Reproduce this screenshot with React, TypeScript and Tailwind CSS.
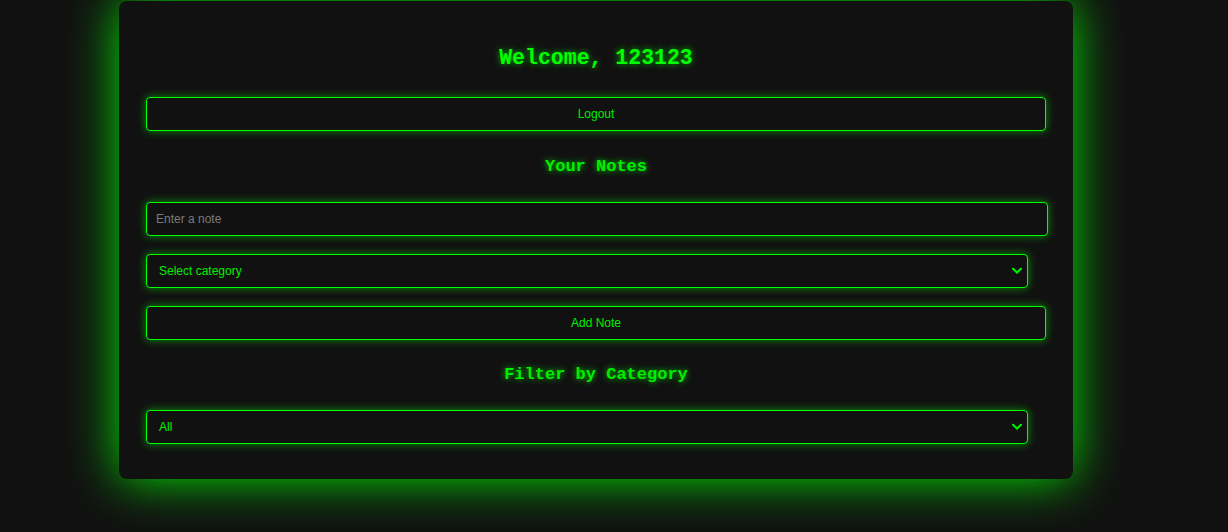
import React from "react";

const glow = "shadow-[0_0_8px_rgba(0,255,0,0.55)]";

function Chevron() {
  return (
    <svg
      className="pointer-events-none absolute right-[5px] top-1/2 -translate-y-1/2"
      width="10"
      height="7"
      viewBox="0 0 10 7"
      fill="none"
    >
      <path d="M1 1.2 L5 5 L9 1.2" stroke="#00ee00" strokeWidth="2.2" strokeLinecap="square" />
    </svg>
  );
}

function Select({ label }: { label: string }) {
  return (
    <div className={`relative w-[882px] h-[34px] rounded-[4px] border border-[#00ff00] bg-[#111111] ${glow}`}>
      <div className="flex h-full items-center pl-[12px] text-[12px] text-[#00ee00] font-['Liberation_Sans',Arial,sans-serif]">
        {label}
      </div>
      <Chevron />
    </div>
  );
}

function Button({ label }: { label: string }) {
  return (
    <button
      className={`w-[900px] h-[34px] rounded-[4px] border border-[#00ff00] bg-[#111111] ${glow} text-[12px] text-[#00ee00] font-['Liberation_Sans',Arial,sans-serif] flex items-center justify-center`}
    >
      {label}
    </button>
  );
}

export default function App() {
  return (
    <div className="min-h-[532px] w-full bg-[#111111] overflow-hidden">
      <div className="ml-[119px] mt-[1px] w-[954px] rounded-[8px] bg-[#111111] shadow-[0_0_50px_rgba(0,255,0,0.9)] px-[27px] pt-[43px] pb-[35px]">
        <h2 className="h-[28px] flex items-center justify-center text-[21.5px] font-bold text-[#00ff00] font-['Liberation_Mono','Courier_New',monospace] [text-shadow:0_0_6px_rgba(0,255,0,0.7)]">
          Welcome, 123123
        </h2>
        <div className="mt-[25px]">
          <Button label="Logout" />
        </div>
        <h3 className="mt-[24px] h-[24px] flex items-center justify-center text-[17px] font-bold text-[#00ee00] font-['Liberation_Mono','Courier_New',monospace] [text-shadow:0_0_6px_rgba(0,255,0,0.8)]">
          Your Notes
        </h3>
        <input
          placeholder="Enter a note"
          className={`mt-[23px] block w-[902px] h-[34px] rounded-[4px] border border-[#00ff00] bg-[#111111] ${glow} pl-[9px] text-[12px] text-[#00ee00] placeholder:text-[#7a7a7a] outline-none font-['Liberation_Sans',Arial,sans-serif]`}
        />
        <div className="mt-[18px]">
          <Select label="Select category" />
        </div>
        <div className="mt-[18px]">
          <Button label="Add Note" />
        </div>
        <h3 className="mt-[23px] h-[24px] flex items-center justify-center text-[17px] font-bold text-[#00ee00] font-['Liberation_Mono','Courier_New',monospace] [text-shadow:0_0_6px_rgba(0,255,0,0.8)]">
          Filter by Category
        </h3>
        <div className="mt-[23px]">
          <Select label="All" />
        </div>
      </div>
    </div>
  );
}
